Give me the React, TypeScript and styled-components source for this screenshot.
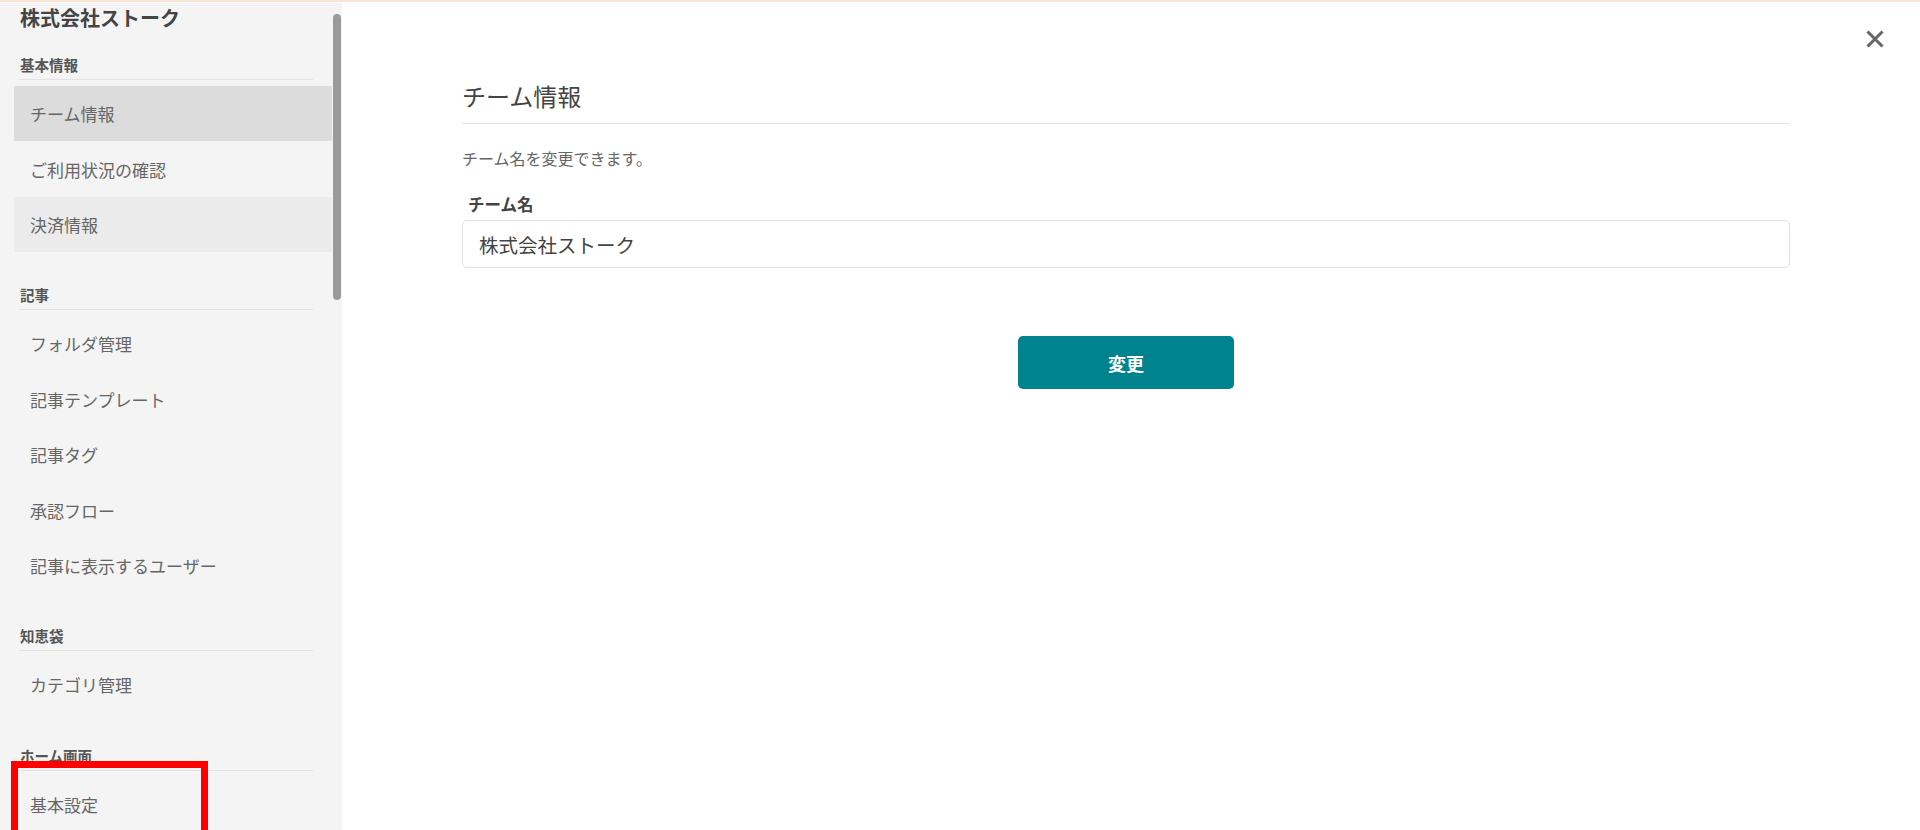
import styled, { createGlobalStyle } from "styled-components";

const GlobalStyle = createGlobalStyle`
  html, body {
    margin: 0;
    padding: 0;
    height: 830px;
    overflow: hidden;
    background: #fff;
  }
  body {
    font-family: "Noto Sans CJK JP", "Noto Sans", sans-serif;
    color: #555;
  }
  * { box-sizing: border-box; }
`;

const sections = [
  {
    title: "基本情報",
    items: [
      { label: "チーム情報", state: "active" },
      { label: "ご利用状況の確認" },
      { label: "決済情報", state: "hover" },
    ],
  },
  {
    title: "記事",
    items: [
      { label: "フォルダ管理" },
      { label: "記事テンプレート" },
      { label: "記事タグ" },
      { label: "承認フロー" },
      { label: "記事に表示するユーザー" },
    ],
  },
  {
    title: "知恵袋",
    items: [{ label: "カテゴリ管理" }],
  },
  {
    title: "ホーム画面",
    items: [{ label: "基本設定", marked: true }],
  },
];

const Page = styled.div`
  display: flex;
  height: 830px;
  padding-top: 1px;
  border-top: 2px solid #fbe3d6;
`;

const Sidebar = styled.aside`
  position: relative;
  width: 342px;
  flex-shrink: 0;
  background: #f4f4f4;
  padding: 3px 10px 0 14px;
  overflow: hidden;
`;

const ScrollThumb = styled.div`
  position: absolute;
  top: 11px;
  right: 1px;
  width: 8px;
  height: 286px;
  border-radius: 4px;
  background: #9a9a9a;
`;

const TeamName = styled.div`
  font-size: 20px;
  font-weight: 700;
  color: #444;
  line-height: 24px;
  padding-left: 6px;
`;

const Section = styled.section<{ $first?: boolean }>`
  margin-top: ${(p) => (p.$first ? "25px" : "33px")};
`;

const SectionTitle = styled.div`
  margin: 0 19px 6px 5px;
  padding: 0 0 4px 1px;
  font-size: 14.5px;
  font-weight: 700;
  color: #555;
  line-height: 20px;
  border-bottom: 1px solid #e2e2e2;
`;

const Item = styled.div<{ $state?: string }>`
  position: relative;
  height: 55.4px;
  display: flex;
  align-items: center;
  padding-left: 16px;
  font-size: 17px;
  color: #666;
  background: ${(p) =>
    p.$state === "active" ? "#dcdcdc" : p.$state === "hover" ? "#ebebeb" : "transparent"};
`;

const Marker = styled.div`
  position: absolute;
  left: -3px;
  top: -16px;
  width: 197px;
  height: 90px;
  border: 7px solid #f00;
`;

const Main = styled.main`
  position: relative;
  flex: 1;
  padding: 0 130px 0 120px;
`;

const CloseButton = styled.button`
  position: absolute;
  top: 24px;
  right: 33px;
  width: 24px;
  height: 24px;
  padding: 0;
  border: none;
  background: none;
  cursor: pointer;
  display: flex;
  align-items: center;
  justify-content: center;
`;

const Content = styled.div`
  padding-top: 77px;
`;

const Heading = styled.h2`
  margin: 0;
  font-size: 24px;
  font-weight: 400;
  color: #444;
  line-height: 32px;
  padding-bottom: 11px;
  border-bottom: 1px solid #e2e2e2;
`;

const Description = styled.p`
  margin: 23px 0 0;
  font-size: 16px;
  color: #666;
  line-height: 22px;
`;

const Label = styled.label`
  display: block;
  margin: 24px 0 5px 6px;
  font-size: 16.5px;
  font-weight: 700;
  color: #444;
  line-height: 22px;
`;

const Input = styled.input`
  display: block;
  width: 100%;
  height: 48px;
  padding: 0 16px;
  border: 1px solid #e0e0e0;
  border-radius: 5px;
  font-family: inherit;
  font-size: 19.5px;
  color: #444;
  outline: none;
`;

const Actions = styled.div`
  display: flex;
  justify-content: center;
  margin-top: 68px;
`;

const SubmitButton = styled.button`
  width: 216px;
  height: 53px;
  border: none;
  border-radius: 5px;
  background: #00838f;
  color: #fff;
  font-family: inherit;
  font-size: 18px;
  font-weight: 700;
  cursor: pointer;
`;

export default function App() {
  return (
    <>
      <GlobalStyle />
      <Page>
        <Sidebar>
          <TeamName>株式会社ストーク</TeamName>
          {sections.map((s, i) => (
            <Section key={s.title} $first={i === 0}>
              <SectionTitle>{s.title}</SectionTitle>
              {s.items.map((it: any) => (
                <Item key={it.label} $state={it.state}>
                  {it.label}
                  {it.marked && <Marker />}
                </Item>
              ))}
            </Section>
          ))}
          <ScrollThumb />
        </Sidebar>
        <Main>
          <CloseButton aria-label="閉じる">
            <svg width="18" height="18" viewBox="0 0 18 18">
              <path d="M1.5 1.5 L16.5 16.5 M16.5 1.5 L1.5 16.5" stroke="#666" strokeWidth="3" />
            </svg>
          </CloseButton>
          <Content>
            <Heading>チーム情報</Heading>
            <Description>チーム名を変更できます。</Description>
            <Label>チーム名</Label>
            <Input defaultValue="株式会社ストーク" />
            <Actions>
              <SubmitButton>変更</SubmitButton>
            </Actions>
          </Content>
        </Main>
      </Page>
    </>
  );
}
